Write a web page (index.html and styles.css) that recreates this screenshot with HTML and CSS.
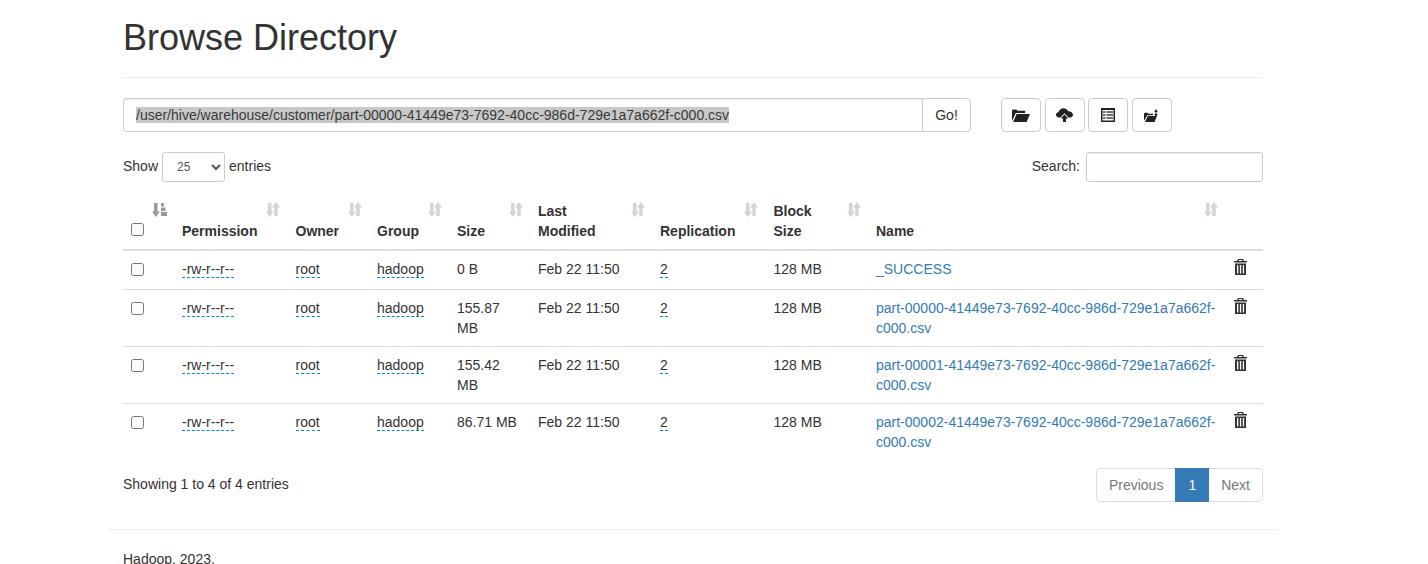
FILE: index.html
```html
<!DOCTYPE html>
<html lang="en">
<head>
    <meta charset="UTF-8">
    <title>Browsing HDFS</title>
    <link rel="stylesheet" href="styles.css">
</head>
<body>
    <svg class="defs" width="0" height="0">
        <symbol id="sort-both" viewBox="0 0 14 15">
            <path d="M2 1h3.500v8.500H8L3.750 15 0 9.500h2z"/>
            <path d="M10 0l4 5.500h-2.300V14H8.300V5.500H6z"/>
        </symbol>
        <symbol id="sort-attr" viewBox="0 0 15 15">
            <path d="M2 1h3.500v8.500H8L3.750 15 0 9.500h2z"/>
            <path d="M9 1h3v3.500H9zM9 5.500h4.500V9H9zM9 10h6v4H9z"/>
        </symbol>
        <symbol id="trash" viewBox="0 0 13 16">
            <path fill-rule="evenodd" d="M4 0h5l1 2h3v1.500H0V2h3zM5 1 4.600 2h3.800L8 1zM1 4.500h11V16H1zM3 6v8.500h1.300V6zM5.900 6v8.500h1.300V6zM8.800 6v8.500h1.300V6z"/>
        </symbol>
    </svg>

    <div class="container">
        <div class="page-header">
            <h1>Browse Directory</h1>
        </div>

        <div class="toolbar">
            <div class="path-group">
                <div class="path-input"><span class="selected">/user/hive/warehouse/customer/part-00000-41449e73-7692-40cc-986d-729e1a7a662f-c000.csv</span></div>
                <button class="btn go-btn">Go!</button>
            </div>
            <div class="tool-btns">
                <button class="btn tool-btn">
                    <svg width="18" height="13" viewBox="0 0 18 13"><path d="M0 12V1.500L.8.500h3.700l1 1.300h7.700v2.200H3.800z"/><path d="M4.600 5H18l-3.400 8H1.100z"/></svg>
                </button>
                <button class="btn tool-btn">
                    <svg width="17" height="14" viewBox="0 0 17 14"><path d="M3 9.500C1 9.500 0 8 0 6.800 0 5.200 1.300 4.200 2.500 4.300 3 2 5 .3 7.500.3c2.500 0 4 1.500 4.700 3 2.300-.3 4.800 1.300 4.800 3.500 0 1.600-1.500 2.700-3 2.700h-1.500l-4-4.300-4 4.300z"/><path d="M8.500 6.500l3.800 4H10V14H7v-3.500H4.700z"/></svg>
                </button>
                <button class="btn tool-btn">
                    <svg width="14" height="14" viewBox="0 0 14 14"><path fill-rule="evenodd" d="M0 0h14v14H0zM1.500 2v10.500h11V2z"/><path opacity=".65" d="M2 3h2.500v2H2zM5.500 3H12v2H5.500zM2 6h2.500v2H2zM5.500 6H12v2H5.500zM2 9h2.500v2H2zM5.500 9H12v2H5.500z"/></svg>
                </button>
                <button class="btn tool-btn">
                    <svg width="15" height="13" viewBox="0 0 15 13"><path d="M0 12V4.500l.7-.8h3l.8 1h4.500v1.500H3.200z"/><path d="M3.800 7H13l-2.400 6H1zM11.500 3h-1.300L12 0l1.800 3h-1.300v2h1.300L12 8l-1.800-3h1.300z"/></svg>
                </button>
            </div>
        </div>

        <div class="dt-top">
            <label class="dt-length">Show
                <select class="dt-select"><option>25</option></select>
                entries</label>
            <label class="dt-search">Search:
                <input class="dt-input" type="text"></label>
        </div>

        <table class="file-table">
            <colgroup>
                <col class="c-check"><col class="c-perm"><col class="c-owner"><col class="c-group"><col class="c-size">
                <col class="c-date"><col class="c-repl"><col class="c-block"><col class="c-name"><col class="c-del">
            </colgroup>
            <thead>
                <tr>
                    <th><input type="checkbox"><svg class="sort sort-on"><use href="#sort-attr"/></svg></th>
                    <th>Permission<svg class="sort"><use href="#sort-both"/></svg></th>
                    <th>Owner<svg class="sort"><use href="#sort-both"/></svg></th>
                    <th>Group<svg class="sort"><use href="#sort-both"/></svg></th>
                    <th>Size<svg class="sort"><use href="#sort-both"/></svg></th>
                    <th>Last Modified<svg class="sort"><use href="#sort-both"/></svg></th>
                    <th>Replication<svg class="sort"><use href="#sort-both"/></svg></th>
                    <th>Block Size<svg class="sort"><use href="#sort-both"/></svg></th>
                    <th>Name<svg class="sort"><use href="#sort-both"/></svg></th>
                    <th></th>
                </tr>
            </thead>
            <tbody>
                <tr>
                    <td><input type="checkbox"></td>
                    <td><span class="editable">-rw-r--r--</span></td>
                    <td><span class="editable">root</span></td>
                    <td><span class="editable">hadoop</span></td>
                    <td>0 B</td>
                    <td>Feb 22 11:50</td>
                    <td><span class="editable">2</span></td>
                    <td>128 MB</td>
                    <td><a href="#">_SUCCESS</a></td>
                    <td><svg class="trash"><use href="#trash"/></svg></td>
                </tr>
                <tr>
                    <td><input type="checkbox"></td>
                    <td><span class="editable">-rw-r--r--</span></td>
                    <td><span class="editable">root</span></td>
                    <td><span class="editable">hadoop</span></td>
                    <td>155.87 MB</td>
                    <td>Feb 22 11:50</td>
                    <td><span class="editable">2</span></td>
                    <td>128 MB</td>
                    <td><a href="#">part-00000-41449e73-7692-40cc-986d-729e1a7a662f-c000.csv</a></td>
                    <td><svg class="trash"><use href="#trash"/></svg></td>
                </tr>
                <tr>
                    <td><input type="checkbox"></td>
                    <td><span class="editable">-rw-r--r--</span></td>
                    <td><span class="editable">root</span></td>
                    <td><span class="editable">hadoop</span></td>
                    <td>155.42 MB</td>
                    <td>Feb 22 11:50</td>
                    <td><span class="editable">2</span></td>
                    <td>128 MB</td>
                    <td><a href="#">part-00001-41449e73-7692-40cc-986d-729e1a7a662f-c000.csv</a></td>
                    <td><svg class="trash"><use href="#trash"/></svg></td>
                </tr>
                <tr>
                    <td><input type="checkbox"></td>
                    <td><span class="editable">-rw-r--r--</span></td>
                    <td><span class="editable">root</span></td>
                    <td><span class="editable">hadoop</span></td>
                    <td>86.71 MB</td>
                    <td>Feb 22 11:50</td>
                    <td><span class="editable">2</span></td>
                    <td>128 MB</td>
                    <td><a href="#">part-00002-41449e73-7692-40cc-986d-729e1a7a662f-c000.csv</a></td>
                    <td><svg class="trash"><use href="#trash"/></svg></td>
                </tr>
            </tbody>
        </table>

        <div class="dt-bottom">
            <div class="dt-info">Showing 1 to 4 of 4 entries</div>
            <ul class="pagination">
                <li class="page-item">Previous</li>
                <li class="page-item active">1</li>
                <li class="page-item">Next</li>
            </ul>
        </div>
    </div>

    <div class="footer-wrap">
        <hr class="footer-line">
        <p class="footer-text">Hadoop, 2023.</p>
    </div>
</body>
</html>
```

FILE: styles.css
```css
html { overflow: hidden; }
body { margin: 0; background: #fff; color: #333; font-family: "Liberation Sans", Arial, sans-serif; font-size: 14px; line-height: 20px; }
a { color: #337ab7; text-decoration: none; }
.defs { position: absolute; }

.container { width: 1140px; margin-left: 123px; }

.page-header { padding-top: 18px; padding-bottom: 19px; border-bottom: 1px solid #eee; margin-bottom: 20px; }
h1 { margin: 0; font-size: 36px; font-weight: 500; line-height: 40px; }

.toolbar { display: flex; margin-bottom: 20px; }
.path-group { display: flex; width: 848px; height: 34px; }
.path-input { flex: 1; padding: 6px 12px; border: 1px solid #ccc; border-right: none; border-radius: 4px 0 0 4px; box-shadow: inset 0 1px 1px rgba(0,0,0,.075); color: #555; white-space: nowrap; }
.selected { background: #c8c8c8; color: #3a3a3a; display: inline-block; height: 16px; line-height: 16px; }
.btn { display: flex; align-items: center; justify-content: center; background: #fff; border: 1px solid #ccc; color: #333; font: inherit; padding: 0; }
.go-btn { width: 49px; border-radius: 0 4px 4px 0; }
.tool-btns { display: flex; gap: 3.67px; margin-left: 30px; }
.tool-btn { width: 40px; height: 34px; border-radius: 4px; }
.tool-btn svg { fill: #222; }

.dt-top { display: flex; justify-content: space-between; align-items: flex-start; height: 30px; margin-bottom: 11px; }
.dt-length, .dt-search { display: flex; align-items: flex-start; line-height: 28px; }
.dt-select { width: 63px; height: 30px; margin: 0 4px; padding: 5px 10px; font: 12px "Liberation Sans", Arial, sans-serif; color: #555; background: #fff; border: 1px solid #ccc; border-radius: 3px; }
.dt-input { width: 177px; height: 30px; box-sizing: border-box; margin-left: 6px; border: 1px solid #ccc; border-radius: 3px; box-shadow: inset 0 1px 1px rgba(0,0,0,.075); }

.file-table { width: 1140px; table-layout: fixed; border-collapse: collapse; }
.c-check { width: 51px; }
.c-perm { width: 113.5px; }
.c-owner { width: 81.5px; }
.c-group { width: 80px; }
.c-size { width: 81px; }
.c-date { width: 122px; }
.c-repl { width: 113.5px; }
.c-block { width: 102.5px; }
.c-name { width: 357px; }
.c-del { width: 38px; }
th { position: relative; padding: 8px 30px 8px 8px; text-align: left; vertical-align: bottom; font-weight: bold; border-bottom: 2px solid #ddd; }
td { padding: 8px; vertical-align: top; border-bottom: 1px solid #ddd; }
tbody tr:last-child td { border-bottom: none; }
input[type="checkbox"] { width: 13px; height: 13px; margin: 4px 0 0; display: block; }
th input[type="checkbox"] { margin-bottom: 5px; }

.sort { position: absolute; top: 9px; right: 7.5px; width: 14px; height: 15px; fill: #d4d4d4; }
.sort-on { width: 15px; fill: #999; }

.editable { border-bottom: 1px dashed #08c; }
.trash { width: 13px; height: 16px; fill: #333; display: block; margin: 0 0 6px 1px; }

.dt-bottom { display: flex; justify-content: space-between; margin-top: 8px; }
.dt-info { padding-top: 6px; }
.pagination { display: flex; margin: 0; padding: 0; list-style: none; }
.page-item { padding: 6px 12px; border: 1px solid #ddd; margin-left: -1px; color: #777; background: #fff; }
.page-item:first-child { border-radius: 4px 0 0 4px; }
.page-item:last-child { border-radius: 0 4px 4px 0; }
.page-item.active { background: #337ab7; border-color: #337ab7; color: #fff; position: relative; }

.footer-wrap { width: 1140px; margin-left: 108px; padding: 0 15px; }
.footer-line { width: 1170px; margin: 27px 0 19px -15px; border: none; border-top: 1px solid #eee; }
.footer-text { margin: 0; }
```
